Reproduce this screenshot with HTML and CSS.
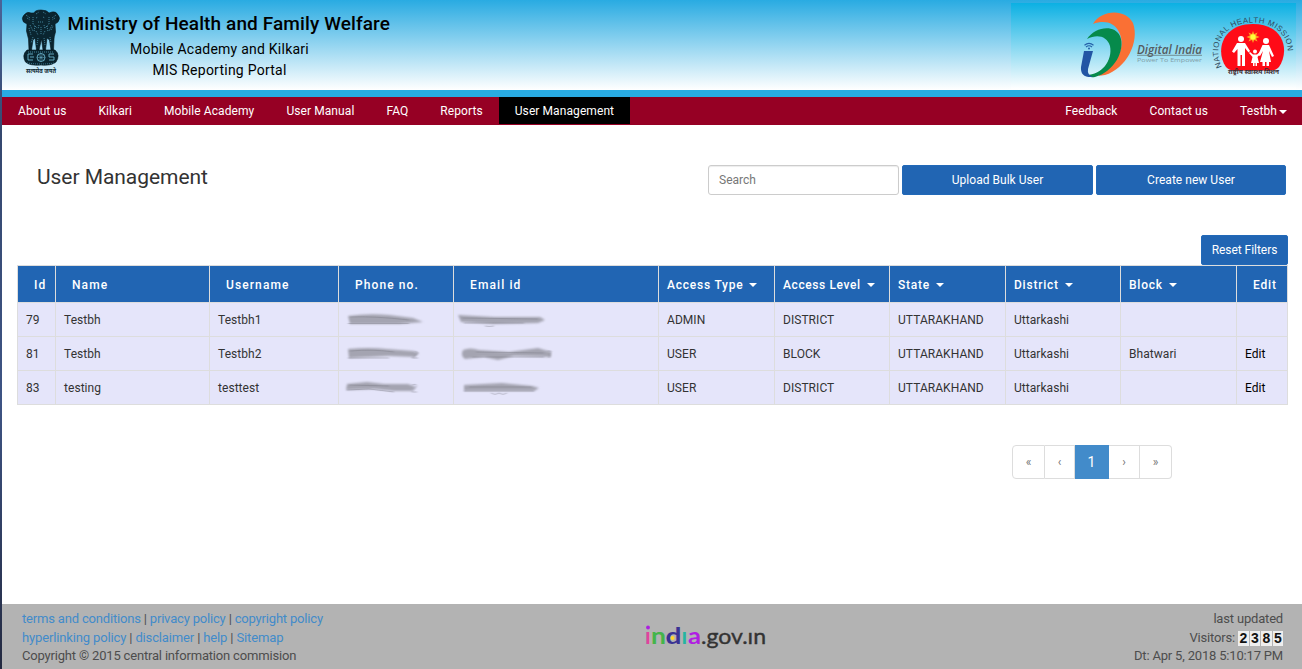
FILE: index.html
```html
<!DOCTYPE html>
<html lang="en">
<head>
<meta charset="utf-8">
<title>User Management</title>
<link rel="stylesheet" href="styles.css">
</head>
<body>
<svg width="0" height="0" class="defs"><filter id="soft" x="-10%" y="-40%" width="120%" height="180%"><feGaussianBlur stdDeviation="1.3 0.9"/></filter><filter id="fine" x="-10%" y="-40%" width="120%" height="180%"><feGaussianBlur stdDeviation="0.8 0.4"/></filter></svg>
<div class="page">
  <header class="banner">
    <svg class="emblem" width="40" height="68" viewBox="0 0 40 68">
      <g fill="#0a2530" stroke="#04141b" stroke-width=".6">
        <path d="M13 4Q14 1 20 1T28 4L31 3Q35 2 37 6Q40 9 37 13L34 15L34.500 23Q33 28 33 30L32.500 41H30L28.500 31L26 29L24.500 41H22L20.500 30L18 41H15.500L14 29L12 31L10.500 41H8L7.500 30L5.500 22L6 15L2.500 13Q0 9 3 6Q6 2 10 4Z"/>
        <path d="M6 41H34Q39.500 46 35 53Q30 57 20 56Q9 57 4.500 53Q.5 46 6 41Z"/>
      </g>
      <g fill="none" stroke="#5aa9c5" stroke-width=".7">
        <path d="M15 5l3-2m4 0l3 2M15 9l2-1m5 0l2 1M17 13h6M12 8v7l4 4m12-11v7l-4 4M5 6l4 3m26-3l-4 3M6 9l3 2m25-2l-3 2M9 16l3 6m19-6l-3 6M15 22l2 4m7-4l-2 4M20 18v7M12 28l-2 6m19-6l1 6M17 29l-1 7m7-7l1 7M8 19l2 7m20-5l2-4M14 17l-1 6m13-6l1 6M18 16l-1 4m6-4l1 4" stroke-dasharray="1 1"/>
        <path d="M6 54q14 2 28 0M7 43h26" stroke-dasharray="1 1"/>
      </g>
      <g fill="none" stroke="#6cb4cd" stroke-width=".9">
        <path d="M12 45H7v6h5M9 48h4M28 45h5M28 45v3h5v3h-5"/>
        <circle cx="20" cy="48.500" r="4"/><path d="M20 44.500v8M16 48.500h8M17 45.500l6 6M23 45.500l-6 6" stroke-width=".5"/>
      </g>
      <text x="5" y="63.500" class="motto" textLength="30" lengthAdjust="spacingAndGlyphs">सत्यमेव जयते</text>
    </svg>
    <div class="titles">
      <h1>Ministry of Health and Family Welfare</h1>
      <p class="sub-a">Mobile Academy and Kilkari</p>
      <p class="sub-b">MIS Reporting Portal</p>
    </div>
    <div class="logos">
      <svg width="285" height="86" viewBox="1011 3 285 86">
        <path fill="#fa7034" d="M1093 24C1101 10 1125 8 1133 23C1140 42 1126 69 1105 75L1098 76C1116 65 1127 48 1119 32C1114 22 1104 20 1093 24Z"/>
        <path fill="#068a4b" d="M1087 39C1095 27 1114 24 1120 36C1126 50 1114 72 1095 77Q1089 78 1087 75C1101 75 1113 61 1110 46C1107 36 1097 34 1087 39Z"/>
        <path fill="#2255a4" d="M1084 51H1093L1088 69Q1087 75 1093 77Q1080 78 1081 67Z"/>
        <g fill="none" stroke="#2460a8" stroke-width="1.2"><path d="M1084.500 45.200q4.500-3.500 9 0M1086 47q3-2.500 6 0"/></g>
        <circle cx="1089" cy="48.500" r="1" fill="#2460a8"/>
        <text x="1137" y="54" class="di" textLength="65" lengthAdjust="spacingAndGlyphs">Digital India</text>
        <path d="M1137 55.300h65" stroke="#68777b" stroke-width=".8"/>
        <text x="1137" y="62" class="power" textLength="65" lengthAdjust="spacingAndGlyphs">Power To Empower</text>
        <path fill="#ff0b17" d="M1226 67C1215 51 1222 24 1253 24C1284 24 1290 51 1279 67Q1276 70.500 1270 70.500H1235Q1229 70.500 1226 67Z"/>
        <path d="M1253 31l1.200 3 3.400-1.500-1.500 3 3.500 1.600-3.500 1.500 1.500 3-3.400-1.500-1.200 3-1.200-3-3.400 1.500 1.500-3-3.500-1.500 3.500-1.600-1.500-3 3.400 1.500z" fill="#ffa020"/>
        <circle cx="1253" cy="37" r="2.700" fill="#ffff38"/>
        <g fill="#fff"><circle cx="1241" cy="39" r="3"/><circle cx="1266" cy="41" r="3"/><circle cx="1255" cy="51.500" r="2"/>
        <path d="M1237 43H1245L1250 51L1248.500 52.500L1245 48V66H1242V55H1240.500V66H1237.500V49L1234 53L1232 51.500Z"/>
        <path d="M1262.500 45H1269L1274 56L1272 57L1269 51L1271 62H1269V66H1266.500V62H1265V66H1262.500V62H1260L1263 51L1260 56L1258 55Z"/>
        <path d="M1253 54.500H1257L1260 52L1261 53L1257.500 57L1259 63H1257V66H1255.500V63H1254.500V66H1253V63H1251L1252.500 57L1249 53L1250 52Z"/></g>
        <path id="arc" fill="none" d="M1222 67C1211 44 1225 22.500 1253 22.500C1281 22.500 1295 44 1284 67"/>
        <text class="nhm"><textPath href="#arc" textLength="117">NATIONAL HEALTH MISSION</textPath></text>
        <text x="1228" y="74" class="hindi" textLength="51" lengthAdjust="spacingAndGlyphs">राष्ट्रीय स्वास्थ्य मिशन</text>
      </svg>
    </div>
  </header>
  <nav class="nav">
    <a>About us</a><a>Kilkari</a><a>Mobile Academy</a><a>User Manual</a><a>FAQ</a><a>Reports</a><a class="active">User Management</a>
    <span class="grow"></span>
    <a>Feedback</a><a>Contact us</a><a class="user">Testbh<i class="caret"></i></a>
  </nav>
  <main>
    <div class="toolbar">
      <h2>User Management</h2>
      <input type="text" placeholder="Search">
      <button>Upload Bulk User</button>
      <button class="create">Create new User</button>
    </div>
    <div class="reset-row"><button class="reset">Reset Filters</button></div>
    <table>
      <colgroup><col class="c1"><col class="c2"><col class="c3"><col class="c4"><col class="c5"><col class="c6"><col class="c7"><col class="c8"><col class="c9"><col class="c10"><col class="c11"></colgroup>
      <thead><tr><th>Id</th><th>Name</th><th>Username</th><th>Phone no.</th><th>Email id</th><th class="f">Access Type<i class="caret"></i></th><th class="f level">Access Level<i class="caret"></i></th><th class="f">State<i class="caret"></i></th><th class="f">District<i class="caret"></i></th><th class="f">Block<i class="caret"></i></th><th class="last">Edit</th></tr></thead>
      <tbody>
        <tr><td>79</td><td>Testbh</td><td>Testbh1</td>
          <td class="m"><svg width="100" height="20"><path class="smear" d="M9 6Q30 3 50 5L74 8L84 12L60 14H11Z"/><path class="trace" d="M11 7Q35 6 70 10M9 13.500H70"/></svg></td>
          <td class="m"><svg width="110" height="20"><path class="smear" d="M4 5L40 7L86 7L91 10L84 13L40 14L7 12Z"/><path class="trace" d="M8 8L84 9M10 13H70M31 16Q35 17 40 16"/></svg></td>
          <td>ADMIN</td><td>DISTRICT</td><td>UTTARAKHAND</td><td>Uttarkashi</td><td></td><td></td></tr>
        <tr><td>81</td><td>Testbh</td><td>Testbh2</td>
          <td class="m"><svg width="100" height="20"><path class="smear" d="M9 5Q30 3 48 5L74 7L80 9L76 13L50 12L10 14Z"/><path class="trace" d="M11 7Q35 5 55 8M76 7L79 9L73 14H79M9 14H50"/></svg></td>
          <td class="m"><svg width="110" height="20"><path class="smear" d="M9 6Q16 3 25 6L55 8L84 4L97 8V13L60 12L44 16L30 13L11 15Q6 12 9 6Z"/><path class="trace" d="M22 8L90 9M93 7H97L95 14M18 13H90"/></svg></td>
          <td>USER</td><td>BLOCK</td><td>UTTARAKHAND</td><td>Uttarkashi</td><td>Bhatwari</td><td class="edit">Edit</td></tr>
        <tr><td>83</td><td>testing</td><td>testtest</td>
          <td class="m"><svg width="100" height="20"><path class="smear" d="M8 6L28 4L45 6L69 6L77 9L73 13L55 13L35 11L7 12Z"/><path class="trace" d="M10 7L50 8M8 12L30 11L55 14M73 7Q79 5 77 9L73 14H78"/></svg></td>
          <td class="m"><svg width="110" height="20"><path class="smear" d="M10 7L48 5L78 8L85 10L80 13L10 13Z"/><path class="trace" d="M10 13H80M15 9H78M37 15Q41 18 45 15Q49 18 53 15"/></svg></td>
          <td>USER</td><td>DISTRICT</td><td>UTTARAKHAND</td><td>Uttarkashi</td><td></td><td class="edit">Edit</td></tr>
      </tbody>
    </table>
    <div class="pager"><a class="p1">«</a><a class="p2">‹</a><a class="on">1</a><a class="p4">›</a><a class="p5">»</a></div>
  </main>
  <footer>
    <div class="links">
      <div><a>terms and conditions</a> | <a>privacy policy</a> | <a>copyright policy</a></div>
      <div class="second"><a>hyperlinking policy</a> | <a>disclaimer</a> | <a>help</a> | <a>Sitemap</a></div>
      <div>Copyright © 2015 central information commision</div>
    </div>
    <svg class="gov" width="122" height="32" viewBox="0 0 122 32">
      <g class="india"><text x="0" y="19" fill="#e0439d">ı</text><text x="6" y="19" textLength="15" lengthAdjust="spacingAndGlyphs" fill="#44b54a">n</text><text x="20.500" y="19" textLength="16" lengthAdjust="spacingAndGlyphs" fill="#3a3293">d</text><text x="36.500" y="19" fill="#24b5a0">ı</text><text x="43" y="19" textLength="13" lengthAdjust="spacingAndGlyphs" fill="#b01ee2">a</text></g>
      <circle cx="3" cy="2.500" r="1.900" fill="#ac20e0"/><circle cx="27.500" cy="13" r="2" fill="#ffd52b"/>
      <text class="govtext" x="56" y="19" textLength="65" lengthAdjust="spacingAndGlyphs">.gov.ın</text>
    </svg>
    <div class="info">
      <div>last updated</div>
      <div class="visits">Visitors: <span class="count"><b>2</b><b>3</b><b>8</b><b>5</b></span></div>
      <div>Dt: Apr 5, 2018 5:10:17 PM</div>
    </div>
  </footer>
</div>
</body>
</html>
```
FILE: styles.css
```css
* { box-sizing: border-box; }
body { margin: 0; background: linear-gradient(#4a6498, #35486f 20%, #3e5484 60%, #232940); font: 12px/18px Roboto, "Liberation Sans", sans-serif; color: #333; overflow: hidden; }
.page { margin-left: 2px; height: 669px; background: #fff; display: flex; flex-direction: column; }
.defs { display: block; }
svg { overflow: visible; }
h1, h2, p { margin: 0; }
.banner { height: 97px; flex: none; display: flex; background: linear-gradient(#29abe2, #fff); background-size: 100% 90px; background-repeat: no-repeat; border-bottom: 7px solid #29abe2; color: #000; }
.emblem { margin: 9px 0 0 19px; flex: none; }
.motto { font: bold 7px "Noto Sans", sans-serif; fill: #122b35; }
.titles { padding: 10px 0 0 6.500px; width: 340px; white-space: nowrap; }
h1 { font-size: 19px; line-height: 28px; font-weight: 500; letter-spacing: .11px; }
.titles p { width: 304px; text-align: center; font-size: 14px; line-height: 20.500px; letter-spacing: .24px; }
.titles .sub-a { padding-top: 1px; }
.logos { margin: 3px 6px 0 auto; height: 86px; background: linear-gradient(#0bb0e3, #fff); }
.logos svg, td svg { display: block; }
.di { font: italic 600 12px "Open Sans", sans-serif; fill: #555b60; }
.power { font: 6px "Open Sans", sans-serif; fill: #829da7; }
.nhm { font: 7.800px "Liberation Sans", sans-serif; fill: #304b5c; }
.hindi { font: bold 6px "Noto Sans", sans-serif; fill: #3b2a30; }
.smear { fill: #a4a4b1; filter: url(#soft); }
.trace { fill: none; stroke: #777783; stroke-width: .8; opacity: .5; filter: url(#fine); }
.nav { height: 28px; flex: none; display: flex; background: #960024; color: #fff; line-height: 28px; }
.nav a { padding: 0 16px; letter-spacing: .085px; }
.nav .active { background: #000; height: 27px; }
.nav .user { padding-right: 15px; }
.grow { flex: 1; }
.caret { display: inline-block; border: 4px solid transparent; border-top-color: #fff; border-bottom: 0; vertical-align: middle; margin-left: 2px; }
main { flex: 1; padding-left: 15px; }
.toolbar { display: flex; padding: 40px 16px 0 20px; height: 110px; align-items: flex-start; }
h2 { flex: 1; font-size: 21px; font-weight: 400; line-height: 24px; letter-spacing: -.05px; }
input { width: 191px; height: 30px; border: 1px solid #ccc; border-radius: 3px; padding: 0 10px; font: 12px Roboto, sans-serif; margin: 0 3px 0 0; box-shadow: inset 0 1px 1px rgba(0,0,0,.075); }
input::placeholder { color: #777; }
button { width: 191px; height: 30px; border: 1px solid #2269b8; border-radius: 2px; background: #2165b3; color: #fff; font: 12px Roboto, sans-serif; letter-spacing: .03px; margin: 0 3px 0 0; padding: 0; }
.create { width: 190px; margin: 0; }
.reset-row { display: flex; justify-content: flex-end; padding-right: 14px; }
.reset { width: 87px; margin: 0; letter-spacing: -.05px; }
table { border-collapse: collapse; table-layout: fixed; width: 1271px; background: #e5e5fa; }
.c1 { width: 38px; } .c2 { width: 154px; } .c3 { width: 129px; } .c4 { width: 115px; } .c5 { width: 205px; } .c6 { width: 116px; } .c7 { width: 115px; } .c8 { width: 116px; } .c9 { width: 115px; } .c10 { width: 116px; } .c11 { width: 51px; }
th, td { border: 1px solid #ddd; padding: 0 8px; text-align: left; height: 34px; white-space: nowrap; }
td { letter-spacing: .05px; }
th { height: 37px; background: #2165b3; color: #fff; font-weight: 500; padding: 1px 0 0 16px; letter-spacing: 1.1px; }
th.f { padding-left: 8px; letter-spacing: .78px; }
th.level { letter-spacing: .6px; }
th.last { letter-spacing: .8px; }
th .caret { margin-left: 6px; }
td.m { padding: 0; }
.edit { color: #000; }
.pager { display: flex; margin: 40px 0 0 995px; height: 34px; line-height: 32px; color: #777; text-align: center; }
.pager a { border: 1px solid #ddd; border-left-width: 0; }
.pager .p1 { width: 33px; border-radius: 4px 0 0 4px; border-left-width: 1px; }
.p2 { width: 30px; } .p4 { width: 31px; }
.p5 { width: 32px; border-radius: 0 4px 4px 0; }
.pager .on { width: 34px; background: #428bca; border-color: #428bca; color: #fff; font-size: 14px; }
footer { height: 65px; flex: none; background: #b3b3b3; display: flex; padding: 6px 19px 0 20px; font-size: 13px; line-height: 18.500px; color: #4d4d4d; letter-spacing: -.18px; }
footer a { color: #428bca; }
.links { width: 623px; white-space: nowrap; }
.second { letter-spacing: -.14px; }
.info { margin-left: auto; text-align: right; white-space: nowrap; }
.gov { margin-top: 15px; flex: none; letter-spacing: 0; }
.india, .govtext { font: 22px Lato, sans-serif; }
.india { font-weight: bold; }
.govtext { fill: #333; stroke: #333; stroke-width: .4; }
.count { display: inline-flex; gap: 1px; vertical-align: middle; }
.count b { width: 10.500px; height: 15px; background: #eee; color: #111; font: bold 14px/15px "Liberation Sans", sans-serif; text-align: center; }
```
